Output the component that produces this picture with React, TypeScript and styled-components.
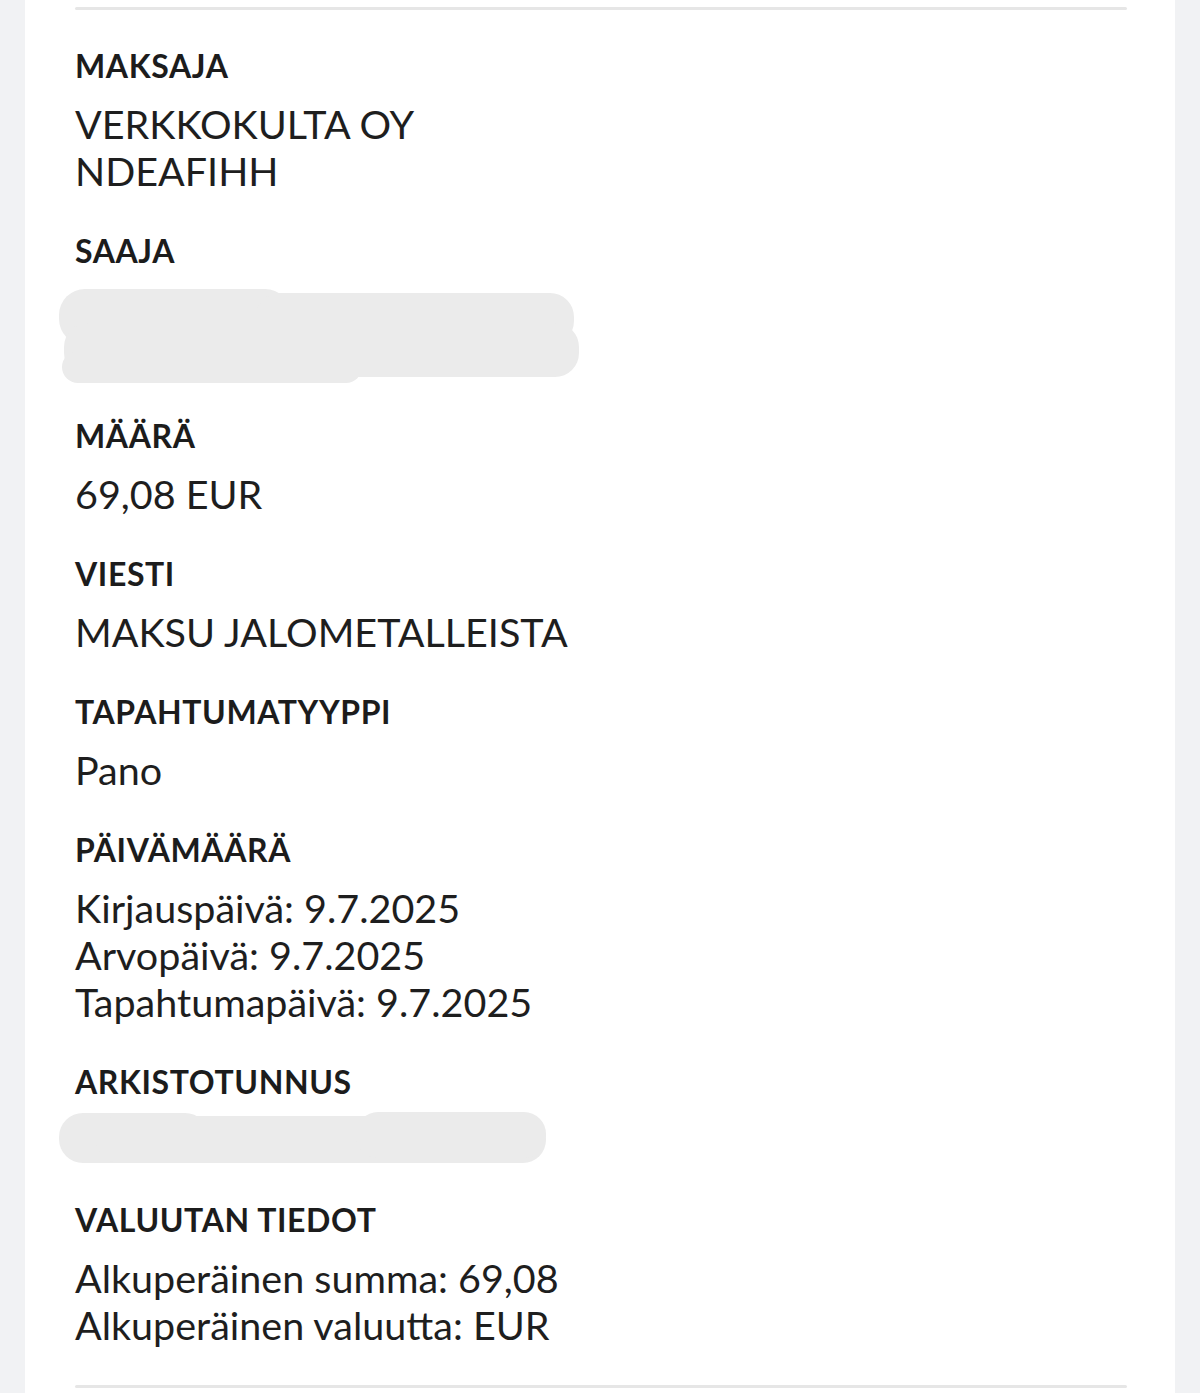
import React from "react";
import styled, { createGlobalStyle } from "styled-components";

const Global = createGlobalStyle`
  html, body { margin: 0; padding: 0; background: #f1f2f4; }
  body { font-family: "Lato", "Noto Sans", sans-serif; }
`;

const Page = styled.div`
  min-height: 1393px;
  padding: 0 25px;
  box-sizing: border-box;
`;

const Card = styled.div`
  background: #ffffff;
  min-height: 1393px;
  padding: 7px 48px 0 50px;
  box-sizing: border-box;
`;

const Rule = styled.div`
  height: 3px;
  background: #e6e6e6;
  border-radius: 2px;
`;

const List = styled.div`
  display: flex;
  flex-direction: column;
  gap: 37px;
  padding: 36px 0 37px;
`;

const Section = styled.section`
  display: flex;
  flex-direction: column;
  gap: 14px;
`;

const Label = styled.div`
  font-family: "Lato", "Noto Sans", sans-serif;
  font-weight: 700;
  font-size: 32px;
  line-height: 40px;
  color: #1c1c1c;
  letter-spacing: 0.6px;
`;

const Value = styled.div`
  font-family: "Lato", "Noto Sans", sans-serif;
  font-weight: 400;
  font-size: 39.5px;
  line-height: 47px;
  color: #1e1e1e;
`;

const Line = styled.div`
  height: 47px;
`;

const Redacted = styled.svg<{ $h: number }>`
  display: block;
  margin-left: -19px;
  height: ${(p) => p.$h}px;
  overflow: visible;
`;

const fields: { label: string; lines?: string[]; blob?: "two" | "one" }[] = [
  { label: "MAKSAJA", lines: ["VERKKOKULTA OY", "NDEAFIHH"] },
  { label: "SAAJA", blob: "two" },
  { label: "MÄÄRÄ", lines: ["69,08 EUR"] },
  { label: "VIESTI", lines: ["MAKSU JALOMETALLEISTA"] },
  { label: "TAPAHTUMATYYPPI", lines: ["Pano"] },
  {
    label: "PÄIVÄMÄÄRÄ",
    lines: [
      "Kirjauspäivä: 9.7.2025",
      "Arvopäivä: 9.7.2025",
      "Tapahtumapäivä: 9.7.2025",
    ],
  },
  { label: "ARKISTOTUNNUS", blob: "one" },
  {
    label: "VALUUTAN TIEDOT",
    lines: ["Alkuperäinen summa: 69,08", "Alkuperäinen valuutta: EUR"],
  },
];

function BlobTwo() {
  return (
    <Redacted $h={94} width={525} viewBox="0 0 525 94">
      <rect x="3" y="4" width="232" height="56" rx="26" fill="#ebebeb" />
      <rect x="200" y="8" width="318" height="52" rx="24" fill="#ebebeb" />
      <rect x="8" y="38" width="515" height="54" rx="24" fill="#ebebeb" />
      <rect x="6" y="66" width="300" height="32" rx="16" fill="#ebebeb" />
    </Redacted>
  );
}

function BlobOne() {
  return (
    <Redacted $h={47} width={495} viewBox="0 0 495 47">
      <rect x="3" y="-3" width="150" height="50" rx="24" fill="#ebebeb" />
      <rect x="40" y="0" width="450" height="47" rx="23" fill="#ebebeb" />
      <rect x="300" y="-4" width="190" height="46" rx="22" fill="#ebebeb" />
    </Redacted>
  );
}

export default function App() {
  return (
    <Page>
      <Global />
      <Card>
        <Rule />
        <List>
          {fields.map((f) => (
            <Section key={f.label}>
              <Label>{f.label}</Label>
              {f.lines && (
                <Value>
                  {f.lines.map((l) => (
                    <Line key={l}>{l}</Line>
                  ))}
                </Value>
              )}
              {f.blob === "two" && <BlobTwo />}
              {f.blob === "one" && <BlobOne />}
            </Section>
          ))}
        </List>
        <Rule />
      </Card>
    </Page>
  );
}
